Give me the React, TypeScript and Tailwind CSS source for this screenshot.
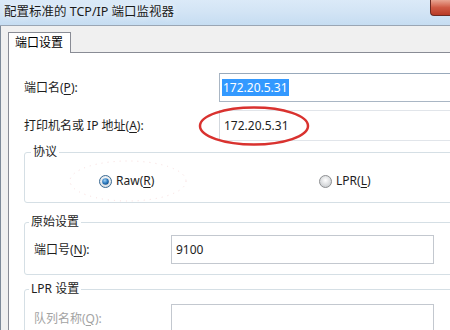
import React from 'react';

const font = "font-['Noto_Sans','Noto_Sans_CJK_SC',sans-serif]";

// Win7 style radio button
const Radio = ({ checked }: { checked?: boolean }) => (
  <svg width="13" height="13" viewBox="0 0 13 13" className="shrink-0">
    <defs>
      <radialGradient id={checked ? 'rOn' : 'rOff'} cx="50%" cy="40%" r="60%">
        <stop offset="0%" stopColor="#ffffff" />
        <stop offset="100%" stopColor={checked ? '#d7dde3' : '#c9cccf'} />
      </radialGradient>
      <radialGradient id="dot" cx="40%" cy="35%" r="70%">
        <stop offset="0%" stopColor="#9fd0f4" />
        <stop offset="60%" stopColor="#2a79be" />
        <stop offset="100%" stopColor="#124a82" />
      </radialGradient>
    </defs>
    <circle cx="6.5" cy="6.5" r="6" fill={`url(#${checked ? 'rOn' : 'rOff'})`} stroke={checked ? '#3c6b93' : '#8f9193'} strokeWidth="1" />
    {checked && <circle cx="6.5" cy="6.5" r="3.3" fill="url(#dot)" />}
  </svg>
);

const Group = ({ title, titleMl, className, children }: { title: string; titleMl: string; className: string; children: React.ReactNode }) => (
  <fieldset className={`ml-[15px] w-[460px] border border-[#d5dfe5] rounded-[3px] ${className}`}>
    <legend className={`${titleMl} px-[2px] text-[12px] leading-[16px] text-[#1e1e1e]`}>{title}</legend>
    {children}
  </fieldset>
);

export default function App() {
  return (
    <div className={`${font} relative w-[450px] h-[330px] overflow-hidden bg-[#f0f0f0] flex flex-col`}>
      {/* Title bar */}
      <div className="h-[25px] shrink-0 flex justify-between items-start bg-gradient-to-b from-[#dbeaf8] via-[#d2e4f5] to-[#c6ddf2]">
        <div className="h-[25px] flex items-center pl-[4px] text-[12.5px] text-[#1a1a1a] [text-shadow:0_0_6px_#ffffff]">
          配置标准的 TCP/IP 端口监视器
        </div>
        <div className="w-[20px] h-[16px] rounded-bl-[4px] border border-t-0 border-r-0 border-[#6b2a22] bg-gradient-to-b from-[#e8a593] via-[#cf5a44] to-[#b83a26]" />
      </div>

      <div className="flex flex-1 border-t border-[#9aa6b4]">
        <div className="w-[3px] bg-[#d6e3f1] border-r border-[#7d8a99]" />
        <div className="flex-1 pl-[7px] pt-[6px] flex flex-col">
          {/* Tab */}
          <div className="relative z-10 -mb-px w-[63px] h-[21px] bg-white border border-b-0 border-[#898c95] pl-[6px] flex items-center text-[12px] text-black">
            端口设置
          </div>
          {/* Tab panel */}
          <div className="relative flex-1 w-[480px] bg-white border-t border-l border-[#898c95] text-[12px] text-[#1e1e1e]">
            <div className="flex items-center pl-[15px] mt-[20px]">
              <div className="w-[195px]">端口名(<u className="underline-offset-2">P</u>):</div>
              <div className="flex-1 h-[29px] border border-[#a9b6c4] border-t-[#98a9bb] flex items-center pl-[2px]">
                <span className="bg-[#3399ff] text-white leading-[17px] px-px">172.20.5.31</span>
              </div>
            </div>
            <div className="flex items-center pl-[15px] mt-[8px]">
              <div className="w-[195px]">打印机名或 IP 地址(<u className="underline-offset-2">A</u>):</div>
              <div className="flex-1 h-[31px] border border-[#e1e5ea] border-l-[#d3d8de] flex items-center pl-[4px]">
                172.20.5.31
              </div>
            </div>

            <Group title="协议" titleMl="ml-[6px]" className="mt-[3px] h-[59px]">
              <div className="h-[42px] flex items-center pl-[74px]">
                <div className="w-[220px] flex items-center gap-[4px]">
                  <Radio checked />
                  <span>Raw(<u className="underline-offset-2">R</u>)</span>
                </div>
                <div className="flex items-center gap-[4px]">
                  <Radio />
                  <span>LPR(<u className="underline-offset-2">L</u>)</span>
                </div>
              </div>
            </Group>

            <Group title="原始设置" titleMl="ml-[4px]" className="mt-[11px]">
              <div className="flex items-center pl-[9px] pt-[5px] pb-[10px]">
                <div className="w-[137px]">端口号(<u className="underline-offset-2">N</u>):</div>
                <div className="w-[263px] h-[29px] border border-[#c3c8cf] flex items-center pl-[4px]">9100</div>
              </div>
            </Group>

            <Group title="LPR 设置" titleMl="ml-[4px]" className="mt-[6px]">
              <div className="flex items-center pl-[9px] pt-[7px] pb-[10px]">
                <div className="w-[137px] text-[#a3a3a3]">队列名称(<u className="underline-offset-2">Q</u>):</div>
                <div className="w-[263px] h-[29px] border border-[#c3c8cf]" />
              </div>
            </Group>
          </div>
        </div>
      </div>

      {/* Red annotation ellipses drawn over the dialog */}
      <svg className="absolute left-[197px] top-[105px] pointer-events-none" width="116" height="44" viewBox="0 0 116 44">
        <ellipse cx="57" cy="21" rx="54" ry="18.5" fill="none" stroke="#d9322f" strokeWidth="2.5" />
      </svg>
      <svg className="absolute left-[66px] top-[158px] pointer-events-none" width="124" height="46" viewBox="0 0 124 46">
        <ellipse cx="62" cy="23" rx="58" ry="20" fill="none" stroke="#f9dede" strokeWidth="1" strokeDasharray="1 5" />
      </svg>
    </div>
  );
}
